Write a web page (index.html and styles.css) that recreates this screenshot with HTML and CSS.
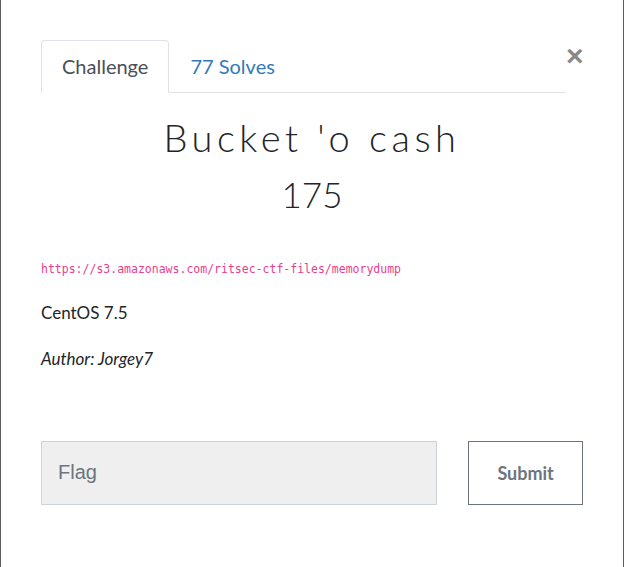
FILE: index.html
```html
<!DOCTYPE html>
<html lang="en">
<head>
    <meta charset="UTF-8">
    <meta name="viewport" content="width=device-width, initial-scale=1.0">
    <title>Bucket 'o cash</title>
    <link rel="stylesheet" href="styles.css">
</head>
<body>
    <div class="modal">
        <div class="modal-head">
            <nav class="tabs">
                <a href="#" class="tab active">Challenge</a>
                <a href="#" class="tab">77 Solves</a>
            </nav>
            <button class="close">&times;</button>
        </div>

        <div class="challenge">
            <h2 class="challenge-name">Bucket 'o cash</h2>
            <h3 class="challenge-value">175</h3>
            <div class="challenge-desc">
                <p class="link-line"><code>https://s3.amazonaws.com/ritsec-ctf-files/memorydump</code></p>
                <p>CentOS 7.5</p>
                <p><em>Author: Jorgey7</em></p>
            </div>
        </div>

        <form class="flag-form">
            <input type="text" class="flag-input" placeholder="Flag">
            <button type="button" class="submit-btn">Submit</button>
        </form>
    </div>
</body>
</html>
```

FILE: styles.css
```css
body {
    margin: 0;
    background: #5c5c5c;
    font-family: Lato, "Open Sans", sans-serif;
    color: #212529;
}
.modal {
    margin: 0 1px;
    height: 567px;
    box-sizing: border-box;
    background: #fff;
    padding: 40px 40px 0 40px;
}
.modal-head {
    display: flex;
    align-items: flex-start;
}
.tabs {
    flex: 1;
    display: flex;
    border-bottom: 1px solid #dee2e6;
}
.tab {
    display: block;
    padding: 12px 20px;
    margin-bottom: -1px;
    font-size: 20px;
    line-height: 27px;
    color: #337ab7;
    text-decoration: none;
    border: 1px solid transparent;
    border-radius: 4px 4px 0 0;
}
.tab.active {
    color: #495057;
    border-color: #dee2e6 #dee2e6 #fff;
}
.close {
    margin-left: 0;
    margin-top: 4px;
    padding: 0;
    width: 17px;
    border: none;
    background: none;
    font-family: "Liberation Sans", Arial, sans-serif;
    font-size: 30px;
    font-weight: bold;
    line-height: 24px;
    color: #888;
    cursor: pointer;
}
.challenge-name {
    margin: 22px 0 0;
    text-align: center;
    font-family: Lato, sans-serif;
    font-weight: 300;
    font-size: 38px;
    letter-spacing: 4.5px;
    line-height: 1.2;
}
.challenge-value {
    margin: 12px 0 0;
    text-align: center;
    font-weight: 300;
    font-size: 35px;
    line-height: 1.2;
}
.challenge-desc {
    margin-top: 40px;
    font-size: 17px;
}
.challenge-desc p {
    margin: 0 0 18px;
    line-height: 28px;
}
.challenge-desc .link-line {
    line-height: 24px;
}
code {
    font-family: "DejaVu Sans Mono", monospace;
    font-size: 11.5px;
    color: #e83e8c;
}
.flag-form {
    display: flex;
    margin-top: 68px;
}
.flag-input {
    width: 397px;
    height: 64px;
    box-sizing: border-box;
    padding: 0 16px;
    background: #efefef;
    border: 1px solid #ccd3da;
    font-family: "Liberation Sans", Arial, sans-serif;
    font-size: 20px;
    color: #495057;
}
.flag-input::placeholder {
    color: #6c757d;
}
.submit-btn {
    margin-left: 31px;
    width: 115px;
    height: 64px;
    background: #fff;
    border: 1px solid #6c757d;
    font-family: Lato, sans-serif;
    font-weight: bold;
    font-size: 18px;
    color: #6c757d;
    cursor: pointer;
}
```
